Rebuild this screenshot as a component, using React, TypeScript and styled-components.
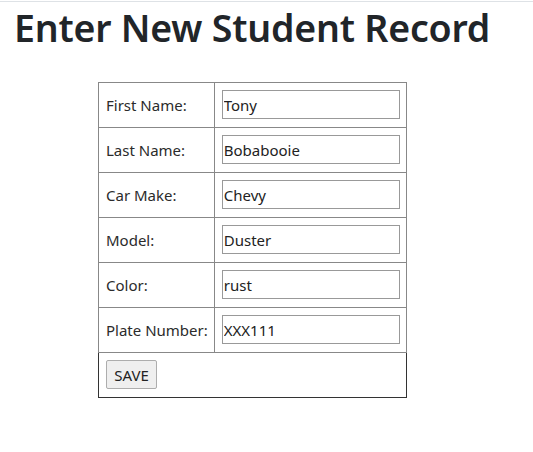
import React from "react"
import styled, { createGlobalStyle } from "styled-components"

const GlobalStyle = createGlobalStyle`
	html, body {
		margin: 0;
		padding: 0;
		background: #fff;
	}
	body {
		font-family: "Noto Sans", "Open Sans", sans-serif;
		color: #212529;
	}
`

const fields = [
	{ label: "First Name:", value: "Tony" },
	{ label: "Last Name:", value: "Bobabooie" },
	{ label: "Car Make:", value: "Chevy" },
	{ label: "Model:", value: "Duster" },
	{ label: "Color:", value: "rust" },
	{ label: "Plate Number:", value: "XXX111" },
]

export default function App() {
	return (
		<>
			<GlobalStyle />
			<Page>
				<Title>Enter New Student Record</Title>
				<FormTable>
					<tbody>
						{fields.map((f) => (
							<tr key={f.label}>
								<LabelCell>{f.label}</LabelCell>
								<InputCell>
									<TextInput defaultValue={f.value} />
								</InputCell>
							</tr>
						))}
						<tr>
							<ButtonCell colSpan={2}>
								<SaveButton>SAVE</SaveButton>
							</ButtonCell>
						</tr>
					</tbody>
				</FormTable>
			</Page>
		</>
	)
}

const Page = styled.div`
	border-top: 1px solid #dee2e6;
	margin-top: 1px;
	padding: 0 15px 0 13px;
`

const Title = styled.h1`
	margin: 2px 0 30px 1px;
	font-size: 37.5px;
	font-weight: 600;
	line-height: 48px;
	color: #212529;
	letter-spacing: -0.2px;
`

const FormTable = styled.table`
	margin-left: 85px;
	border-collapse: collapse;
	border: 1px solid #333;
`

const LabelCell = styled.td`
	padding: 7px 6px 8px 7px;
	height: 29px;
	border: 1px solid #888;
	font-size: 15px;
	color: #2b2b2b;
	white-space: nowrap;
	vertical-align: middle;
`

const InputCell = styled.td`
	padding: 7px 6px 8px 7px;
	border: 1px solid #888;
	vertical-align: middle;
`

const TextInput = styled.input`
	display: block;
	box-sizing: border-box;
	width: 178px;
	height: 29px;
	margin: 0;
	padding: 1px 1px;
	border: 1px solid #999;
	font-family: "Noto Sans", "Open Sans", sans-serif;
	font-size: 15px;
	color: #222;
	outline: none;
`

const ButtonCell = styled.td`
	padding: 7px 7px 8px;
	border: 1px solid #333;
`

const SaveButton = styled.button`
	display: block;
	box-sizing: border-box;
	width: 51px;
	height: 29px;
	padding: 0;
	border: 1px solid #adadad;
	border-radius: 2px;
	background: #efefef;
	font-family: "Noto Sans", "Open Sans", sans-serif;
	font-size: 15px;
	color: #222;
`
